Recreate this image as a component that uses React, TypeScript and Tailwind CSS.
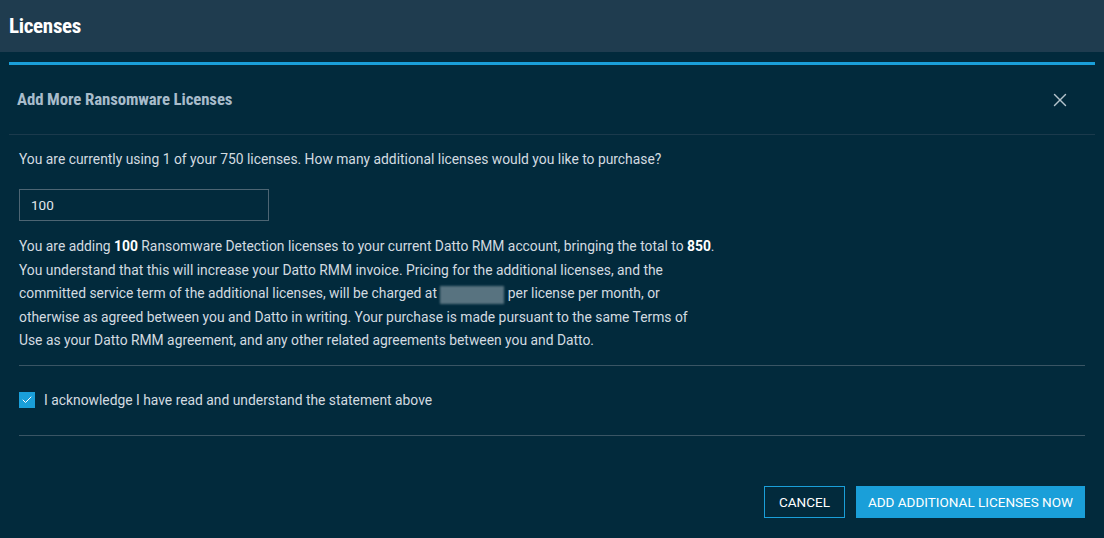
import React, { useState } from 'react';
import { X, Check } from 'lucide-react';

const heading = 'font-["Roboto",sans-serif] [font-stretch:75%]';
const body = 'font-["Roboto","Liberation_Sans",sans-serif]';

export default function App() {
  const [count, setCount] = useState('100');
  const [ack, setAck] = useState(true);

  return (
    <div className={`w-[1104px] h-[538px] bg-[#022a3c] overflow-hidden ${body}`}>
      {/* page header */}
      <div className="h-[52px] bg-[#1f3c4f] flex items-center px-[9px] pt-[2px]">
        <h1 className={`${heading} font-bold text-[21px] tracking-[-0.3px] text-white`}>Licenses</h1>
      </div>

      {/* modal */}
      <div className="mx-[9px] mt-[10px] border-t-[3px] border-[#1a9fd9]">
        <div className="h-[70px] flex items-center justify-between pl-[8px] pr-[24px] border-b border-[#1b3a4c]">
          <h2 className={`${heading} font-bold text-[16.8px] tracking-[-0.1px] text-[#a8bccb]`}>Add More Ransomware Licenses</h2>
          <button className="text-[#b4c3cc]">
            <X size={22} strokeWidth={1.5} />
          </button>
        </div>

        <div className="px-[10px] text-[13.85px] text-[#d3dbe0]">
          <p className="mt-[14px] leading-[20px]">
            You are currently using 1 of your 750 licenses. How many additional licenses would you like to purchase?
          </p>
          <input
            value={count}
            onChange={e => setCount(e.target.value)}
            className="mt-[20px] w-[250px] h-[32px] border border-[#4d6573] bg-transparent px-[11px] text-[13.5px] text-[#e1e7eb] outline-none"
          />
          <p className="mt-[14px] leading-[23.6px] whitespace-nowrap">
            You are adding <b className="text-white">100</b> Ransomware Detection licenses to your current Datto RMM account, bringing the total to <b className="text-white">850</b>.
            <br />
            You understand that this will increase your Datto RMM invoice. Pricing for the additional licenses, and the
            <br />
            committed service term of the additional licenses, will be charged at{' '}
            <span className="inline-block align-middle w-[64px] h-[18px] bg-[#587380] blur-[1px]" />{' '}
            per license per month, or
            <br />
            otherwise as agreed between you and Datto in writing. Your purchase is made pursuant to the same Terms of
            <br />
            Use as your Datto RMM agreement, and any other related agreements between you and Datto.
          </p>

          <div className="mt-[12px] border-t border-[#3a5564]" />
          <label className="h-[69px] flex items-center gap-[9px] cursor-pointer">
            <span
              onClick={() => setAck(!ack)}
              className="w-[16px] h-[16px] bg-[#1a9fd9] flex items-center justify-center"
            >
              {ack && <Check size={12} strokeWidth={2} className="text-white" />}
            </span>
            <span className="text-[#d3dbe0]">I acknowledge I have read and understand the statement above</span>
          </label>
          <div className="border-t border-[#3a5564]" />

          <div className="flex justify-end gap-[11px] mt-[50px]">
            <button className="h-[32px] px-[14px] border border-[#1a9fd9] text-white text-[13.5px]">CANCEL</button>
            <button className="h-[32px] px-[12px] bg-[#1a9fd9] text-white text-[13.5px]">ADD ADDITIONAL LICENSES NOW</button>
          </div>
        </div>
      </div>
    </div>
  );
}
